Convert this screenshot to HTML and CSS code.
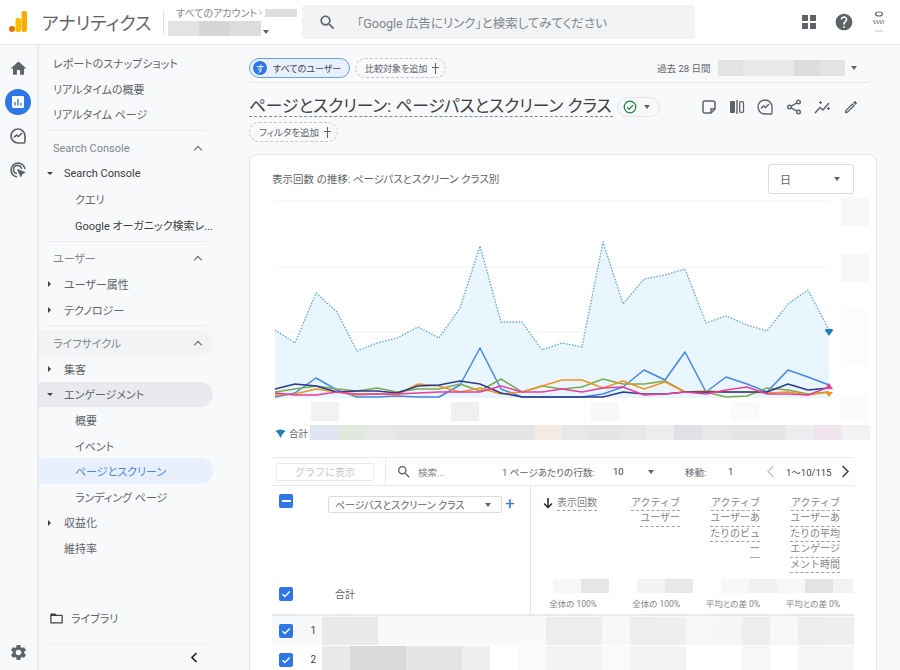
FILE: index.html
```html
<!DOCTYPE html>
<html lang="ja">
<head>
    <meta charset="utf-8">
    <title>アナリティクス</title>
    <link rel="stylesheet" href="styles.css">
</head>
<body>
    <header class="topbar">
        <svg class="logo" width="18" height="22" viewBox="0 0 18 22">
            <rect x="12.5" y="0" width="5.5" height="21" rx="2" fill="#f9ab00"/>
            <rect x="6.5" y="7" width="5.5" height="14" rx="2" fill="#fbbc04"/>
            <circle cx="3" cy="18" r="3" fill="#e37400"/>
        </svg>
        <div class="brand">アナリティクス</div>
        <div class="account">
            <div class="account-top">
                <span>すべてのアカウント</span>
                <svg width="6" height="9" viewBox="0 0 6 9"><path d="M1 1l3.500 3.500L1 8" fill="none" stroke="#80868b" stroke-width="1"/></svg>
                <i class="blur-top"></i>
            </div>
            <div class="account-name">
                <i class="c-e3"></i><i class="c-d6"></i><i class="c-dd"></i><span class="caret-down"></span>
            </div>
        </div>
        <div class="search">
            <svg width="19" height="19" viewBox="0 0 24 24"><path fill="#5f6368" d="M15.500 14h-.79l-.28-.27C15.410 12.590 16 11.110 16 9.500 16 5.910 13.090 3 9.500 3S3 5.910 3 9.500 5.910 16 9.500 16c1.610 0 3.090-.59 4.230-1.570l.27.28v.79l5 4.990L20.490 19l-4.990-5zm-6 0C7.010 14 5 11.990 5 9.500S7.010 5 9.500 5 14 7.010 14 9.500 11.990 14 9.500 14z"/></svg>
            <span>「Google 広告にリンク」と検索してみてください</span>
        </div>
        <div class="top-icons">
            <svg width="16" height="16" viewBox="0 0 16 16" fill="#5f6368"><rect x="1" y="1" width="6" height="6"/><rect x="9" y="1" width="6" height="6"/><rect x="1" y="9" width="6" height="6"/><rect x="9" y="9" width="6" height="6"/></svg>
            <svg width="20" height="20" viewBox="0 0 24 24"><path fill="#5f6368" d="M12 2C6.480 2 2 6.480 2 12s4.480 10 10 10 10-4.480 10-10S17.520 2 12 2zm1 17h-2v-2h2v2zm2.070-7.750l-.9.92C13.450 12.900 13 13.500 13 15h-2v-.5c0-1.100.45-2.100 1.170-2.830l1.240-1.260c.37-.36.59-.86.59-1.410 0-1.100-.9-2-2-2s-2 .9-2 2H8c0-2.210 1.790-4 4-4s4 1.790 4 4c0 .88-.36 1.680-.93 2.250z"/></svg>
            <svg width="16" height="26" viewBox="0 0 16 26" fill="none" stroke="#5f6368"><ellipse cx="8" cy="5" rx="3.500" ry="2" stroke-width="1.200"/><path d="M2 12h12M3 14h10" stroke-width="1.200" stroke-dasharray="2 1"/><path d="M4 22h8" stroke="#c4c7c9"/></svg>
        </div>
    </header>

    <div class="layout">
        <nav class="rail">
            <svg class="rail-icon" width="19" height="19" viewBox="0 0 24 24"><path fill="#5f6368" d="M10 20v-6h4v6h5v-8h3L12 3 2 12h3v8z"/></svg>
            <div class="rail-active">
                <svg width="12" height="12" viewBox="0 0 12 12"><rect width="12" height="12" rx="1" fill="#fff"/><path d="M3 6v3.500M6 3v6.500M9 7v2.500" stroke="#1a73e8" stroke-width="1.300"/></svg>
            </div>
            <svg class="rail-icon" width="18" height="18" viewBox="0 0 18 18" fill="none" stroke="#5f6368" stroke-width="1.700"><path d="M16 15.500V9a7 7 0 1 0-7 7h7"/><path d="M5 10.500l2.500-2.500 2 1.500L13 6"/></svg>
            <svg class="rail-icon" width="18" height="18" viewBox="0 0 18 18" fill="none" stroke="#5f6368" stroke-width="1.600"><path d="M8 16a7 7 0 1 1 8-8"/><path d="M8 12.500a4 4 0 1 1 4.500-4.500"/><path d="M8.500 8.500l7.500 3-3 1.200-1.200 3z" fill="#5f6368" stroke-width="1"/></svg>
            <svg class="rail-gear" width="19" height="19" viewBox="0 0 24 24"><path fill="#5f6368" d="M19.140 12.940c.04-.3.06-.61.06-.94 0-.32-.02-.64-.07-.94l2.030-1.580c.18-.14.23-.41.12-.61l-1.920-3.320c-.12-.22-.37-.29-.59-.22l-2.390.96c-.5-.38-1.030-.7-1.620-.94l-.36-2.540c-.04-.24-.24-.41-.48-.41h-3.840c-.24 0-.43.17-.47.41l-.36 2.540c-.59.24-1.130.57-1.620.94l-2.390-.96c-.22-.08-.47 0-.59.22L2.740 8.870c-.12.21-.08.47.12.61l2.030 1.580c-.05.3-.09.63-.09.94s.02.64.07.94l-2.030 1.580c-.18.14-.23.41-.12.61l1.920 3.320c.12.22.37.29.59.22l2.390-.96c.5.38 1.030.7 1.620.94l.36 2.540c.05.24.24.41.48.41h3.840c.24 0 .44-.17.47-.41l.36-2.540c.59-.24 1.130-.56 1.620-.94l2.390.96c.22.08.47 0 .59-.22l1.920-3.320c.12-.22.07-.47-.12-.61l-2.010-1.580zM12 15.600c-1.980 0-3.600-1.620-3.600-3.600s1.620-3.600 3.600-3.600 3.600 1.620 3.600 3.600-1.620 3.600-3.600 3.600z"/></svg>
        </nav>

        <aside class="nav">
            <div class="nav-group">
                <div class="nav-row top">レポートのスナップショット</div>
                <div class="nav-row top">リアルタイムの概要</div>
                <div class="nav-row top">リアルタイム ページ</div>
            </div>
            <div class="nav-group">
                <div class="nav-row head">Search Console<span class="chev-up"></span></div>
                <div class="nav-row item strong"><span class="caret-open"></span>Search Console</div>
                <div class="nav-row sub">クエリ</div>
                <div class="nav-row sub strong">Google オーガニック検索レ...</div>
            </div>
            <div class="nav-group">
                <div class="nav-row head">ユーザー<span class="chev-up"></span></div>
                <div class="nav-row item"><span class="caret-closed"></span>ユーザー属性</div>
                <div class="nav-row item"><span class="caret-closed"></span>テクノロジー</div>
            </div>
            <div class="nav-group last">
                <div class="nav-row head hover">ライフサイクル<span class="chev-up"></span></div>
                <div class="nav-row item"><span class="caret-closed"></span>集客</div>
                <div class="nav-row item open"><span class="caret-open"></span>エンゲージメント</div>
                <div class="nav-row sub">概要</div>
                <div class="nav-row sub">イベント</div>
                <div class="nav-row sub active">ページとスクリーン</div>
                <div class="nav-row sub">ランディング ページ</div>
                <div class="nav-row item"><span class="caret-closed"></span>収益化</div>
                <div class="nav-row item plain">維持率</div>
            </div>
            <div class="nav-foot">
                <div class="library">
                    <svg width="15" height="15" viewBox="0 0 24 24"><path fill="#3c4043" d="M20 6h-8l-2-2H4c-1.100 0-1.990.9-1.990 2L2 18c0 1.100.9 2 2 2h16c1.100 0 2-.9 2-2V8c0-1.100-.9-2-2-2zm0 12H4V8h16v10z"/></svg>
                    ライブラリ
                </div>
                <div class="collapse">
                    <svg width="8" height="11" viewBox="0 0 8 11"><path d="M6.500 1L2 5.500 6.500 10" fill="none" stroke="#202124" stroke-width="1.700"/></svg>
                </div>
            </div>
        </aside>

        <main class="main">
            <div class="filters">
                <div class="chip chip-user"><span class="chip-badge">す</span>すべてのユーザー</div>
                <div class="chip chip-add">比較対象を追加<span class="plus"></span></div>
                <div class="date">
                    <span class="date-label">過去 28 日間</span>
                    <div class="date-blur"><i class="c-e3"></i><i class="c-e8"></i><i class="c-e8"></i><i class="c-dd"></i><i class="c-e3"></i></div>
                    <span class="caret-down"></span>
                </div>
            </div>

            <div class="title-row">
                <h1 class="title">ページとスクリーン: ページパスとスクリーン クラス</h1>
                <div class="status">
                    <svg width="14" height="14" viewBox="0 0 14 14" fill="none" stroke="#188038" stroke-width="1.200"><circle cx="7" cy="7" r="5.800"/><path d="M4.200 7.200l2 2 3.800-4"/></svg>
                    <span class="caret-down"></span>
                </div>
                <div class="tools">
                    <svg width="16" height="16" viewBox="0 0 16 16" fill="none" stroke="#5f6368" stroke-width="1.500"><path d="M3.500 2h9a1.500 1.500 0 0 1 1.500 1.500V10l-4 4H3.500A1.500 1.500 0 0 1 2 12.500v-9A1.500 1.500 0 0 1 3.500 2z"/><path d="M14 10h-4v4"/></svg>
                    <svg width="16" height="16" viewBox="0 0 16 16" fill="#5f6368"><rect x="1" y="2" width="5" height="12" rx="1"/><rect x="7.300" y="1" width="1.400" height="14"/><rect x="10.700" y="2.700" width="3.800" height="10.600" rx="1" fill="none" stroke="#5f6368" stroke-width="1.300"/></svg>
                    <svg width="16" height="16" viewBox="0 0 16 16" fill="none" stroke="#5f6368" stroke-width="1.400"><path d="M15 14.500V8a7 7 0 1 0-7 7h7"/><path d="M4 9.500l2.500-2.500 2 1.500L12 5"/></svg>
                    <svg width="16" height="16" viewBox="0 0 16 16" fill="none" stroke="#5f6368" stroke-width="1.400"><circle cx="12.500" cy="3" r="1.800"/><circle cx="3.500" cy="8" r="1.800"/><circle cx="12.500" cy="13" r="1.800"/><path d="M5 7.100l6-3.200M5 8.900l6 3.200"/></svg>
                    <svg width="17" height="16" viewBox="0 0 17 16" fill="none" stroke="#5f6368" stroke-width="1.500"><path d="M1 14l5-5.500 3 2.500 6-7"/><path d="M5 3.500h3M6.500 2v3M13 9.500h3M14.500 8v3" stroke-width="1.100"/></svg>
                    <svg width="16" height="16" viewBox="0 0 24 24"><path fill="#5f6368" d="M14.060 9.020l.92.92L5.920 19H5v-.92l9.060-9.060M17.660 3c-.25 0-.51.1-.7.29l-1.830 1.830 3.750 3.750 1.830-1.830c.39-.39.39-1.020 0-1.410l-2.340-2.340c-.2-.2-.45-.29-.71-.29zm-3.600 3.190L3 17.250V21h3.750L17.810 9.940l-3.750-3.750z"/></svg>
                </div>
            </div>
            <div class="chip chip-add chip-filter">フィルタを追加<span class="plus"></span></div>

            <section class="card">
                <div class="card-head">
                    <span class="card-title">表示回数 の推移: ページパスとスクリーン クラス別</span>
                    <div class="select-day">日<span class="caret-down"></span></div>
                </div>

                <svg class="chart" width="597" height="228" viewBox="272 195 597 228">
                    <g stroke="#f1f3f4" stroke-width="1">
                        <path d="M275 201H828M275 267H828M275 332H828M275 397.500H828"/>
                    </g>
                    <g fill="#f8f8f8">
                        <rect x="841" y="198" width="28" height="28"/>
                        <rect x="841" y="254" width="28" height="28"/>
                        <rect x="841" y="310" width="28" height="56" fill="#fcfcfc"/>
                        <rect x="841" y="394" width="28" height="28" fill="#fbfbfb"/>
                        <rect x="311" y="402" width="28" height="19" fill="#f2f2f2"/>
                        <rect x="451" y="402" width="28" height="19" fill="#f0f0f0"/>
                        <rect x="591" y="402" width="28" height="19"/>
                        <rect x="731" y="402" width="28" height="19" fill="#fafafa"/>
                    </g>
                    <polygon fill="#eaf6fe" points="275,330 295,343 316,293 337,312 357,351 377,343 397,338 418,327 439,338 460,308 480,246 501,322 522,322 542,350 562,343 582,347 603,242 623,304 644,279 665,275 685,269 706,323 726,316 747,325 767,331 788,304 808,290 829,330 829,397 275,397"/>
                    <polyline class="line dotted" points="275,330 295,343 316,293 337,312 357,351 377,343 397,338 418,327 439,338 460,308 480,246 501,322 522,322 542,350 562,343 582,347 603,242 623,304 644,279 665,275 685,269 706,323 726,316 747,325 767,331 788,304 808,290 829,330"/>
                    <polyline class="line" stroke="#4285f4" points="275,397 295,393 316,378 337,390 357,397 377,397 397,396 418,397 439,397 460,385 480,348 501,389 522,397 542,397 562,397 582,397 603,394 623,387 644,370 665,380 685,352 706,392 726,377 747,384 767,392 788,370 808,377 829,385"/>
                    <polyline class="line" stroke="#7cab4e" points="275,392 295,389 316,386 337,389 357,391 377,388 397,392 418,389 439,389 460,384 480,391 501,379 522,392 542,386 562,389 582,387 603,379 623,384 644,384 665,381 685,392 706,392 726,397 747,396 767,388 788,390 808,394 829,392"/>
                    <polyline class="line" stroke="#f29423" points="275,395 295,394 316,389 337,392 357,395 377,394 397,395 418,384 439,386 460,392 480,388 501,394 522,392 542,386 562,380 582,380 603,388 623,381 644,389 665,382 685,392 706,391 726,392 747,392 767,393 788,392 808,395 829,392"/>
                    <polyline class="line" stroke="#2b3a8f" points="275,389 295,384 316,386 337,392 357,391 377,391 397,393 418,386 439,385 460,381 480,384 501,393 522,397 542,397 562,397 582,397 603,397 623,392 644,394 665,394 685,392 706,392 726,392 747,392 767,392 788,384 808,390 829,388"/>
                    <polyline class="line" stroke="#e83e9c" points="275,393 295,395 316,395 337,392 357,394 377,394 397,394 418,393 439,392 460,392 480,392 501,386 522,392 542,392 562,389 582,392 603,388 623,387 644,395 665,394 685,392 706,394 726,390 747,387 767,394 788,394 808,395 829,387"/>
                    <path fill="#f29423" d="M825 392h8l-4 5z"/>
                    <path fill="#e83e9c" d="M829 383l4 6h-8z"/>
                    <path fill="#1f7fb8" d="M824.500 330q4.500-2.500 9 0l-2.500 3-2 3-2-3z"/>
                </svg>

                <div class="legend">
                    <svg width="11" height="10" viewBox="0 0 10 10"><path fill="#1f7fb8" d="M0 3q5-3 10 0L7 6 5 10 3 6z"/></svg>
                    <span class="legend-label">合計</span>
                    <div class="legend-blur">
                        <i class="l1"></i><i class="l2"></i><i class="c-e8"></i><i class="c-e5"></i><i class="c-e5"></i><i class="c-e5"></i><i class="c-e5"></i><i class="c-e5"></i><i class="l3"></i><i class="c-e8"></i><i class="c-e5"></i><i class="c-e8"></i><i class="c-ec"></i><i class="l4"></i><i class="c-e8"></i><i class="c-e5"></i><i class="c-e5"></i><i class="c-ec"></i><i class="l5"></i><i class="c-f2"></i>
                    </div>
                </div>

                <div class="toolbar">
                    <div class="tb-left"><button class="graph-btn">グラフに表示</button></div>
                    <div class="tb-search">
                        <svg width="16" height="16" viewBox="0 0 24 24"><path fill="#5f6368" d="M15.500 14h-.79l-.28-.27C15.410 12.590 16 11.110 16 9.500 16 5.910 13.090 3 9.500 3S3 5.910 3 9.500 5.910 16 9.500 16c1.610 0 3.090-.59 4.230-1.570l.27.28v.79l5 4.990L20.490 19l-4.990-5zm-6 0C7.010 14 5 11.990 5 9.500S7.010 5 9.500 5 14 7.010 14 9.500 11.990 14 9.500 14z"/></svg>
                        <span>検索...</span>
                    </div>
                    <div class="tb-pager">
                        <span class="pg-rows">1 ページあたりの行数:</span>
                        <span class="pg-num">10</span>
                        <span class="caret-down pg-caret"></span>
                        <span class="pg-go">移動:</span>
                        <span class="pg-page">1</span>
                        <svg class="pg-prev" width="9" height="13" viewBox="0 0 9 13"><path d="M7.500 1L2 6.500 7.500 12" fill="none" stroke="#bdc1c6" stroke-width="1.300"/></svg>
                        <span class="pg-range">1〜10/115</span>
                        <svg class="pg-next" width="9" height="13" viewBox="0 0 9 13"><path d="M1.500 1L7 6.500 1.500 12" fill="none" stroke="#3c4043" stroke-width="1.500"/></svg>
                    </div>
                </div>

                <div class="table-head">
                    <div class="th-dim">
                        <div class="dim-top">
                            <span class="check minus"></span>
                            <div class="dim-select">ページパスとスクリーン クラス<span class="caret-down"></span></div>
                            <span class="dim-plus">+</span>
                        </div>
                        <div class="dim-total">
                            <span class="check"><svg width="10" height="10" viewBox="0 0 10 10"><path d="M1.500 5.200l2.400 2.400 4.800-5" fill="none" stroke="#fff" stroke-width="1.400"/></svg></span>
                            <span class="total-label">合計</span>
                        </div>
                    </div>
                    <div class="th-metrics">
                        <div class="metric-names">
                            <div class="metric m1"><span class="ml"><svg class="arrow" width="10" height="11" viewBox="0 0 10 11"><path d="M5 0v9M1 5.500L5 9.500l4-4" fill="none" stroke="#202124" stroke-width="1.500"/></svg><u>表示回数</u></span></div>
                            <div class="metric m2"><u>アクティブ</u><u>ユーザー</u></div>
                            <div class="metric m3"><u>アクティブ</u><u>ユーザーあ</u><u>たりのビュ</u><u>ー</u></div>
                            <div class="metric m3"><u>アクティブ</u><u>ユーザーあ</u><u>たりの平均</u><u>エンゲージ</u><u>メント時間</u></div>
                        </div>
                        <div class="metric-blur">
                            <i class="c-f6"></i><i class="c-e6"></i><i></i><i class="c-f3"></i><i class="c-e8"></i><i></i><i class="c-f8"></i><i class="c-f1"></i><i class="c-f7"></i><i class="c-e2"></i><i class="c-f2 short"></i>
                        </div>
                        <div class="metric-totals">
                            <span class="m1">全体の 100%</span>
                            <span class="m2">全体の 100%</span>
                            <span class="m3">平均との差 0%</span>
                            <span class="m3">平均との差 0%</span>
                        </div>
                    </div>
                </div>

                <div class="row row-odd">
                    <span class="check"><svg width="10" height="10" viewBox="0 0 10 10"><path d="M1.500 5.200l2.400 2.400 4.800-5" fill="none" stroke="#fff" stroke-width="1.400"/></svg></span>
                    <span class="row-num">1</span>
                    <div class="row-blur">
                        <i class="c-e9"></i><i class="c-e9"></i><i></i><i></i><i></i><i></i><i></i><i></i>
                        <i class="c-ec"></i><i class="c-ec"></i><i class="c-f6"></i><i class="c-ec"></i><i class="c-ee"></i><i class="c-f6"></i><i class="c-f5"></i><i class="c-ec"></i><i class="c-f6"></i><i class="c-ec"></i><i class="c-ee"></i>
                    </div>
                </div>
                <div class="row">
                    <span class="check"><svg width="10" height="10" viewBox="0 0 10 10"><path d="M1.500 5.200l2.400 2.400 4.800-5" fill="none" stroke="#fff" stroke-width="1.400"/></svg></span>
                    <span class="row-num">2</span>
                    <div class="row-blur">
                        <i class="c-e9"></i><i class="c-d9"></i><i class="c-d9"></i><i class="c-e5"></i><i class="c-e5"></i><i class="c-ee"></i><i></i><i class="c-fa"></i>
                        <i class="c-f3"></i><i class="c-f3"></i><i class="c-fa"></i><i class="c-f3"></i><i class="c-f3"></i><i></i><i></i><i class="c-f6"></i><i></i><i class="c-f5"></i><i class="c-f5"></i>
                    </div>
                </div>
            </section>
        </main>
    </div>
</body>
</html>
```

FILE: styles.css
```css
/* reset */
* {
    box-sizing: border-box;
}

body {
    margin: 0;
    width: 900px;
    height: 670px;
    overflow: hidden;
    background-color: #f8f9fb;
    color: #5f6368;
    font-family: Roboto, "Noto Sans CJK JP", sans-serif;
    font-size: 11px;
    font-feature-settings: "palt";
}

h1 {
    margin: 0;
    font-weight: 400;
}

i {
    display: block;
}

/* shared small shapes */
.caret-down {
    display: inline-block;
    width: 0;
    height: 0;
    border-left: 3.5px solid transparent;
    border-right: 3.5px solid transparent;
    border-top: 4px solid #5f6368;
}

.caret-open {
    position: absolute;
    left: 8px;
    top: 11px;
    width: 0;
    height: 0;
    border-left: 3px solid transparent;
    border-right: 3px solid transparent;
    border-top: 3.5px solid #3c4043;
}

.caret-closed {
    position: absolute;
    left: 9px;
    top: 10px;
    width: 0;
    height: 0;
    border-top: 3px solid transparent;
    border-bottom: 3px solid transparent;
    border-left: 3.5px solid #3c4043;
}

.chev-up {
    width: 6px;
    height: 6px;
    margin-left: auto;
    margin-right: 12px;
    margin-top: 3px;
    border-left: 1.3px solid #5f6368;
    border-top: 1.3px solid #5f6368;
    transform: rotate(45deg);
}

.plus {
    display: inline-block;
    width: 11px;
    height: 11px;
    margin-left: 5px;
    background:
        linear-gradient(#5f6368, #5f6368) center / 11px 1.3px no-repeat,
        linear-gradient(#5f6368, #5f6368) center / 1.3px 11px no-repeat;
}

/* mosaic colours */
.c-d6 { background-color: #d6d6d6; }
.c-d9 { background-color: #d9d9d9; }
.c-dd { background-color: #dddddd; }
.c-e2 { background-color: #e2e3e3; }
.c-e3 { background-color: #e3e3e3; }
.c-e5 { background-color: #e5e5e5; }
.c-e6 { background-color: #e6e6e6; }
.c-e8 { background-color: #e8e8e8; }
.c-e9 { background-color: #e9eaeb; }
.c-ec { background-color: #ecedee; }
.c-ee { background-color: #eeeff0; }
.c-f1 { background-color: #f1f1f1; }
.c-f2 { background-color: #f2f2f2; }
.c-f3 { background-color: #f3f3f4; }
.c-f5 { background-color: #f5f6f7; }
.c-f6 { background-color: #f6f7f8; }
.c-f7 { background-color: #f7f7f7; }
.c-f8 { background-color: #f8f8f8; }
.c-fa { background-color: #fafafa; }

/* top bar */
.topbar {
    display: flex;
    align-items: center;
    height: 45px;
    background-color: #fff;
    border-bottom: 1px solid #e3e5e8;
    padding-left: 9px;
}

.logo {
    flex: none;
}

.brand {
    margin-left: 15px;
    width: 121px;
    font-size: 18px;
    color: #5f6368;
    white-space: nowrap;
}

.account {
    flex: none;
    width: 134px;
    height: 23px;
    border-left: 1px solid #dadce0;
    padding-left: 4px;
}

.account-top {
    display: flex;
    align-items: center;
    gap: 2px;
    height: 8px;
    margin-top: -2px;
    margin-left: 8px;
    font-size: 10px;
    white-space: nowrap;
    color: #80868b;
}

.blur-top {
    flex: none;
    width: 32px;
    height: 8px;
    background-color: #dedede;
}

.account-name {
    display: flex;
    align-items: center;
    margin-top: 4px;
}

.account-name i {
    width: 31px;
    height: 15px;
}

.account-name .caret-down {
    margin-left: 2px;
    margin-top: 7px;
}

.search {
    display: flex;
    align-items: center;
    flex: none;
    width: 393px;
    height: 34px;
    margin-left: 5px;
    padding-left: 16px;
    gap: 20px;
    background-color: #f1f3f4;
    border-radius: 4px;
    color: #80868b;
    font-size: 12.5px;
}

.top-icons {
    display: flex;
    align-items: center;
    margin-left: 106px;
    gap: 17px;
}

/* icon rail */
.layout {
    display: flex;
    height: 625px;
    overflow: hidden;
}

.rail {
    display: flex;
    flex-direction: column;
    align-items: center;
    flex: none;
    width: 39px;
    padding-top: 14px;
    padding-right: 1px;
    border-right: 2px solid #e8eaed;
}

.rail-icon {
    flex: none;
}

.rail-active {
    display: flex;
    align-items: center;
    justify-content: center;
    width: 26px;
    height: 26px;
    margin: 11px 0 12px;
    border-radius: 50%;
    background-color: #2f76e6;
}

.rail .rail-icon + .rail-icon {
    margin-top: 16px;
}

.rail-gear {
    margin-top: auto;
    margin-bottom: 8px;
}

/* left nav */
.nav {
    display: flex;
    flex-direction: column;
    flex: none;
    width: 175px;
    padding-top: 5.5px;
}

.nav-group {
    padding-bottom: 4px;
    margin-bottom: 3px;
    border-bottom: 1px solid transparent;
    background: linear-gradient(#e8eaed, #e8eaed) 8px 100% / 159px 1px no-repeat;
}

.nav-group.last {
    background: none;
}

.nav-row {
    position: relative;
    display: flex;
    align-items: center;
    height: 25.6px;
    margin-right: 1px;
    border-radius: 0 13px 13px 0;
    white-space: nowrap;
    color: #5f6368;
}

.nav-row.top {
    padding-left: 14px;
}

.nav-row.head {
    padding-left: 14px;
    color: #80868b;
}

.nav-row.item {
    padding-left: 25px;
}

.nav-row.sub {
    padding-left: 36px;
}

.nav-row.strong {
    color: #3c4043;
}

.nav-row.hover {
    background-color: #f1f3f4;
}

.nav-row.open {
    background-color: #e8eaed;
}

.nav-row.active {
    background-color: #e8f0fe;
    color: #4285f4;
}

.nav-foot {
    margin-top: auto;
}

.library {
    display: flex;
    align-items: center;
    gap: 7px;
    height: 24px;
    margin-bottom: 13px;
    padding-left: 10px;
}

.collapse {
    display: flex;
    justify-content: flex-end;
    align-items: center;
    height: 27px;
    margin-left: 9px;
    margin-right: 2px;
    padding-right: 14px;
    border-top: 1.5px solid #eef0f2;
}

/* main area */
.main {
    flex: none;
    width: 628px;
    margin-left: 35px;
    padding-top: 13px;
}

.filters {
    display: flex;
    align-items: center;
    width: 620px;
    height: 25px;
    padding-bottom: 4px;
    border-bottom: 1px solid #e4e6e8;
}

.chip {
    display: inline-flex;
    align-items: center;
    height: 20px;
    border-radius: 10px;
    font-size: 9.5px;
    color: #5f6368;
    white-space: nowrap;
}

.chip-user {
    width: 101px;
    padding-left: 3px;
    font-size: 9px;
    background-color: #e8f0fe;
    border: 1px solid #6a9ef0;
    color: #3c4043;
}

.chip-badge {
    display: flex;
    align-items: center;
    justify-content: center;
    width: 14px;
    height: 14px;
    margin-right: 6px;
    border-radius: 50%;
    background-color: #2f76e6;
    color: #fff;
    font-size: 9px;
}

.chip-add {
    padding: 0 6px 0 9px;
    border: 1px dashed #c4c7c9;
}

.filters .chip-add {
    width: 91px;
    margin-left: 5px;
    font-size: 9px;
}

.date {
    display: flex;
    align-items: center;
    margin-left: auto;
    margin-right: 12px;
}

.date-label {
    font-size: 9.5px;
    margin-right: 7px;
}

.date-blur {
    display: flex;
    margin-right: 6px;
}

.date-blur i {
    width: 25.5px;
    height: 16px;
}

.title-row {
    display: flex;
    align-items: center;
    height: 40px;
    padding-top: 7px;
}

.title {
    flex: none;
    width: 364px;
    font-size: 16.7px;
    line-height: 19px;
    color: #3c4043;
    white-space: nowrap;
    border-bottom: 1.5px dashed #80868b;
}

.status {
    display: flex;
    align-items: center;
    justify-content: space-between;
    width: 43px;
    height: 20px;
    margin-left: 4px;
    padding: 0 9px 0 5px;
    border: 1px solid #e3e5e8;
    border-radius: 10px;
}

.tools {
    display: flex;
    align-items: center;
    gap: 12.2px;
    margin-left: 41px;
}

.chip-filter {
    display: flex;
    width: 89px;
    margin-top: -1px;
}

/* card */
.card {
    width: 628px;
    height: 520px;
    margin-top: 12px;
    padding: 0 22px;
    overflow: hidden;
    background-color: #fff;
    border: 1px solid #e3e5e8;
    border-radius: 8px 8px 0 0;
}

.card-head {
    display: flex;
    justify-content: space-between;
    height: 40px;
    padding-top: 9px;
}

.card-title {
    font-size: 10.5px;
    margin-top: 7px;
}

.select-day {
    display: flex;
    align-items: center;
    justify-content: space-between;
    width: 86px;
    height: 30px;
    padding: 0 13px 0 11px;
    border: 1px solid #dadce0;
    border-radius: 3px;
}

.chart {
    display: block;
}

.line {
    fill: none;
    stroke-width: 1.5;
    stroke-linejoin: round;
}

.dotted {
    stroke: #5ea5d6;
    stroke-width: 1.3;
    stroke-dasharray: 1.5 1.5;
}

.legend {
    display: flex;
    align-items: center;
    width: 597px;
    height: 15px;
    margin-top: 2px;
    padding-left: 3px;
}

.legend svg {
    flex: none;
}

.legend-label {
    flex: none;
    width: 21px;
    margin-left: 3px;
    font-size: 9.5px;
    white-space: nowrap;
}

.legend-blur {
    display: flex;
    flex: none;
}

.legend-blur i {
    width: 28px;
    height: 15px;
}

.l1 { background-color: #dfe5f1; }
.l2 { background-color: #e3e8df; }
.l3 { background-color: #f4ece2; }
.l4 { background-color: #e0e1e8; }
.l5 { background-color: #f0e5ed; }

/* table toolbar */
.toolbar {
    display: flex;
    align-items: center;
    width: 582px;
    height: 29px;
    margin-top: 17px;
    border-top: 1px solid #e8eaed;
    border-bottom: 1px solid #e8eaed;
    font-size: 9.5px;
}

.tb-left {
    display: flex;
    align-items: center;
    width: 114px;
    height: 100%;
    padding-left: 4px;
    border-right: 1px solid #e8eaed;
}

.graph-btn {
    width: 98px;
    height: 18px;
    padding: 0;
    background-color: #fff;
    border: 1px solid #e8eaed;
    border-radius: 2px;
    color: #c4c7c9;
    font-family: inherit;
    font-size: 10px;
}

.tb-search {
    display: flex;
    align-items: center;
    gap: 6px;
    width: 116px;
    padding-left: 10px;
    color: #80868b;
}

.tb-pager {
    display: flex;
    align-items: center;
    white-space: nowrap;
}

.pg-rows { width: 111px; }
.pg-num { width: 35px; color: #3c4043; }
.pg-caret { margin-right: 31px; }
.pg-go { width: 43px; }
.pg-page { width: 38px; color: #3c4043; }
.pg-range { margin: 0 10px 0 11px; color: #3c4043; }

/* table head */
.table-head {
    display: flex;
    width: 582px;
    height: 130px;
    border-bottom: 2px solid #e8eaed;
}

.check {
    display: flex;
    align-items: center;
    justify-content: center;
    flex: none;
    width: 14px;
    height: 14px;
    border-radius: 2px;
    background-color: #2f76e6;
}

.check.minus::after {
    content: "";
    width: 9px;
    height: 2px;
    background-color: #fff;
}

.th-dim {
    display: flex;
    flex-direction: column;
    width: 259px;
    border-right: 1px solid #e0e2e5;
    padding-left: 7px;
}

.dim-top {
    display: flex;
    align-items: flex-start;
    height: 100px;
    padding-top: 8px;
}

.dim-select {
    display: flex;
    align-items: center;
    justify-content: space-between;
    width: 174px;
    height: 17px;
    margin-left: 35px;
    margin-top: 2px;
    padding: 0 10px 0 6px;
    border: 1px solid #dadce0;
    border-radius: 2px;
    font-size: 10px;
}

.dim-plus {
    margin-left: 3px;
    color: #2f76e6;
    font-size: 17px;
    line-height: 19px;
}

.dim-total {
    display: flex;
    align-items: center;
}

.total-label {
    margin-left: 42px;
    font-size: 10px;
}

.th-metrics {
    flex: 1;
}

.metric-names {
    display: flex;
    height: 93px;
    padding-top: 10px;
}

.metric {
    display: flex;
    flex-direction: column;
    align-items: flex-end;
    font-size: 10px;
    font-feature-settings: normal;
    line-height: 14.4px;
    color: #80868b;
}

.metric u,
.ml {
    white-space: nowrap;
}

.metric u {
    display: block;
    text-decoration: none;
    border-bottom: 1px dashed #9aa0a6;
}

.ml {
    display: flex;
    align-items: center;
}

.arrow {
    margin-right: 4px;
}

.m1 { width: 66px; }
.m2 { width: 83px; }
.m3 { width: 80px; }

.metric-blur {
    display: flex;
    padding-left: 22px;
}

.metric-blur i {
    width: 28px;
    height: 14px;
}

.metric-blur .short {
    width: 20px;
}

.metric-totals {
    display: flex;
    margin-top: 4px;
    font-size: 8.5px;
    color: #80868b;
}

.metric-totals span {
    flex: none;
    text-align: right;
    white-space: nowrap;
}

/* table rows */
.row {
    display: flex;
    align-items: center;
    width: 582px;
    height: 29px;
    padding-left: 7px;
}

.row-odd {
    background-color: #f8f9fa;
}

.row-num {
    width: 23px;
    text-align: right;
    color: #3c4043;
    font-size: 10px;
}

.row-blur {
    display: flex;
    margin-left: 6px;
}

.row-blur i {
    width: 28px;
    height: 28px;
}
```
